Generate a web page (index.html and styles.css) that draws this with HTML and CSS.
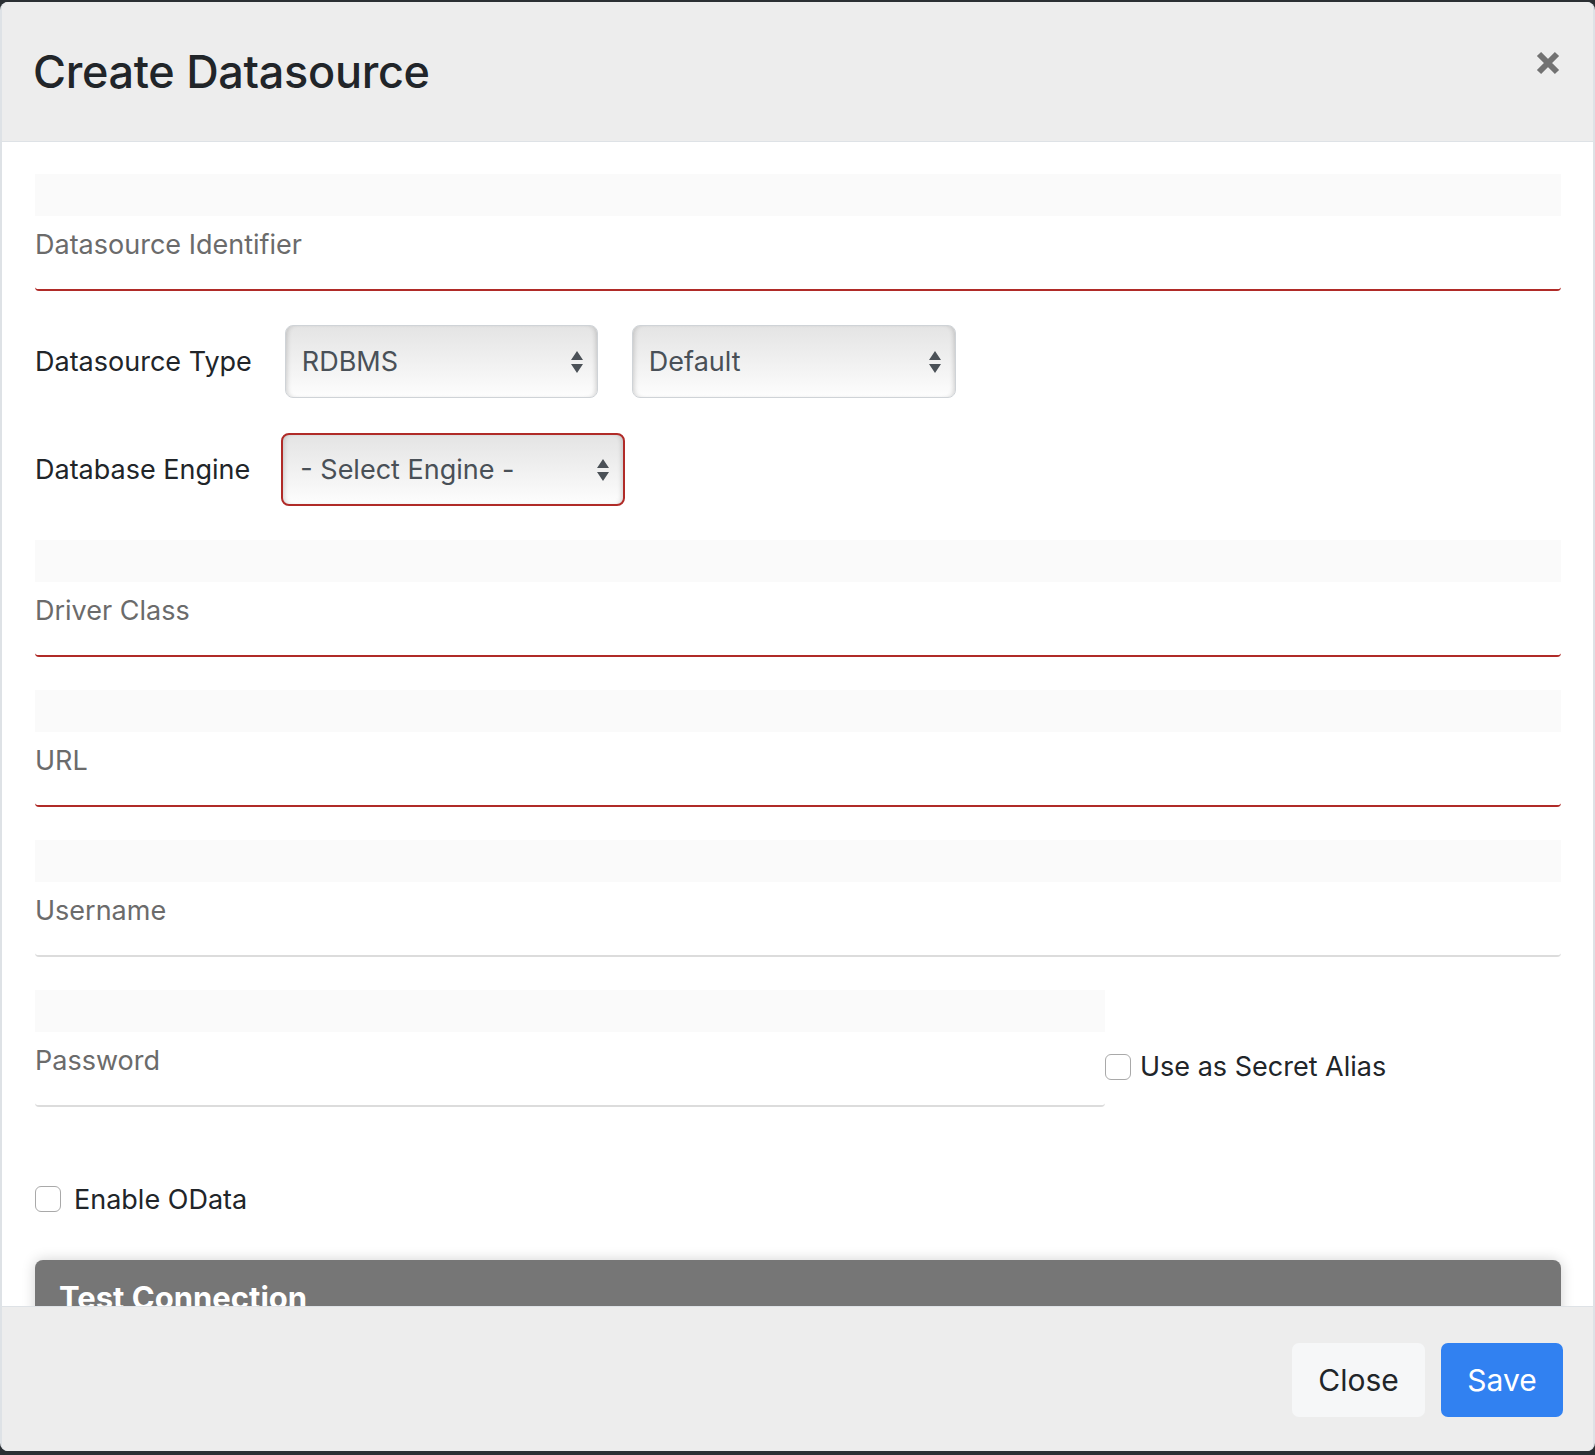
FILE: index.html
```html
<!DOCTYPE html>
<html lang="en">
<head>
<meta charset="utf-8">
<title>Create Datasource</title>
<link rel="stylesheet" href="styles.css">
</head>
<body>
<div class="modal">
  <div class="modal-header">
    <h5 class="modal-title">Create Datasource</h5>
    <button class="close-x" type="button" aria-label="Close">
      <svg width="24" height="24" viewBox="0 0 24 24"><path d="M3 3 L21 21 M21 3 L3 21" stroke="#727272" stroke-width="6" fill="none"/></svg>
    </button>
  </div>
  <div class="modal-body">
    <div class="field field-first">
      <div class="field-top"></div>
      <input class="field-input invalid" type="text" placeholder="Datasource Identifier">
    </div>

    <div class="select-row">
      <label class="row-label">Datasource Type</label>
      <div class="select sel-type"><span>RDBMS</span>
        <svg class="arrows" width="12" height="22" viewBox="0 0 12 22"><path d="M0 9 L6 0 L12 9 Z M0 13 L12 13 L6 22 Z" fill="#4b5157"/></svg>
      </div>
      <div class="select sel-default"><span>Default</span>
        <svg class="arrows" width="12" height="22" viewBox="0 0 12 22"><path d="M0 9 L6 0 L12 9 Z M0 13 L12 13 L6 22 Z" fill="#4b5157"/></svg>
      </div>
    </div>

    <div class="select-row row-engine">
      <label class="row-label">Database Engine</label>
      <div class="select sel-engine invalid-select"><span>- Select Engine -</span>
        <svg class="arrows" width="12" height="22" viewBox="0 0 12 22"><path d="M0 9 L6 0 L12 9 Z M0 13 L12 13 L6 22 Z" fill="#4b5157"/></svg>
      </div>
    </div>

    <div class="field">
      <div class="field-top"></div>
      <input class="field-input invalid" type="text" placeholder="Driver Class">
    </div>

    <div class="field">
      <div class="field-top"></div>
      <input class="field-input invalid" type="text" placeholder="URL">
    </div>

    <div class="field">
      <div class="field-top"></div>
      <input class="field-input" type="text" placeholder="Username">
    </div>

    <div class="password-row">
      <div class="field field-password">
        <div class="field-top"></div>
        <input class="field-input" type="password" placeholder="Password">
      </div>
      <label class="check check-secret"><input type="checkbox"><span>Use as Secret Alias</span></label>
    </div>

    <label class="check check-odata"><input type="checkbox"><span>Enable OData</span></label>

    <div class="test-panel">
      <div class="test-title">Test Connection</div>
    </div>
  </div>
  <div class="modal-footer">
    <button class="btn btn-light" type="button">Close</button>
    <button class="btn btn-primary" type="button">Save</button>
  </div>
</div>
</body>
</html>
```

FILE: styles.css
```css
* { box-sizing: border-box; }

html, body {
  margin: 0;
  padding: 0;
}

body {
  background: #2b2f33;
  padding-top: 2px;
  font-family: Inter, "Noto Sans", "Liberation Sans", sans-serif;
  color: #212529;
  overflow: hidden;
}

.modal {
  width: 1595px;
  height: 1449px;
  background: #fff;
  border-left: 2px solid #dee2e6;
  border-right: 2px solid #dee2e6;
  border-radius: 8px;
  overflow: hidden;
  display: flex;
  flex-direction: column;
}

.modal-header {
  height: 140px;
  flex: none;
  background: #ededed;
  border-bottom: 1px solid #dee2e6;
  display: flex;
  align-items: center;
  justify-content: space-between;
  padding: 0 22px 0 31px;
}

.modal-title {
  margin: 0;
  font-size: 45px;
  font-weight: 500;
  color: #212529;
  letter-spacing: -0.3px;
}

.close-x {
  border: 0;
  background: transparent;
  padding: 0;
  width: 24px;
  height: 24px;
  margin-top: -18px;
  margin-right: 11px;
  display: flex;
}

.modal-body {
  flex: 1;
  min-height: 0;
  overflow: hidden;
  padding: 32px 32px 0 33px;
}

.field {
  margin-bottom: 33px;
}

.field-first {
  margin-bottom: 34px;
}

.field-top {
  height: 42px;
  background: #fafafa;
}

.field-input {
  display: block;
  width: 100%;
  height: 75px;
  border: 0;
  border-bottom: 2px solid #dcdcdc;
  border-radius: 0 0 4px 4px;
  padding: 12px 0 29px 0;
  font-family: inherit;
  font-size: 27px;
  line-height: 32px;
  color: #495057;
  background: #fff;
  outline: none;
}

.field-input::placeholder {
  color: #6b6b6b;
  opacity: 1;
}

.field-input.invalid {
  border-bottom-color: #b02b28;
}

.select-row {
  display: flex;
  align-items: center;
  height: 73px;
  margin-bottom: 35px;
}

.row-engine {
  margin-bottom: 34px;
}

.row-label {
  font-size: 27px;
  color: #212529;
  margin-right: 33px;
  white-space: nowrap;
}

.row-engine .row-label {
  margin-right: 31px;
}

.select {
  position: relative;
  height: 73px;
  border: 1px solid #cfd3d7;
  border-radius: 8px;
  background: linear-gradient(to bottom, #e4e4e4 0%, #efefef 45%, #fdfdfd 100%);
  box-shadow: inset 4px 0 5px -3px rgba(0,0,0,0.18), inset -4px 0 5px -3px rgba(0,0,0,0.18);
  display: flex;
  align-items: center;
  padding-left: 16px;
  font-size: 27px;
  color: #495057;
}

.select .arrows {
  position: absolute;
  right: 14px;
  top: 50%;
  margin-top: -11px;
}

.sel-type { width: 313px; margin-right: 34px; }
.sel-default { width: 324px; }
.sel-engine { width: 344px; padding-left: 17px; }

.invalid-select {
  border: 2px solid #b02b28;
}

.password-row {
  display: flex;
  align-items: center;
}

.field-password {
  width: 1070px;
  flex: none;
  margin-bottom: 0;
}

.check {
  display: flex;
  align-items: center;
  font-size: 27px;
  color: #212529;
}

.check input {
  appearance: none;
  -webkit-appearance: none;
  width: 26px;
  height: 26px;
  margin: 0;
  border: 1.5px solid #a9a9a9;
  border-radius: 6px;
  background: #fff;
}

.check-secret {
  margin-top: 36px;
}

.check-secret input {
  margin-right: 9px;
}

.check-odata {
  margin-top: 72px;
  height: 40px;
}

.check-odata input {
  margin-right: 13px;
}

.test-panel {
  margin-top: 41px;
  height: 200px;
  background: #767676;
  border-radius: 8px 8px 0 0;
  box-shadow: 0 0 14px rgba(0,0,0,0.18);
  padding: 19px 24px;
}

.test-title {
  color: #fff;
  font-size: 31px;
  font-weight: 700;
}

.modal-footer {
  flex: none;
  height: 145px;
  background: #ededed;
  border-top: 1px solid #dee2e6;
  display: flex;
  align-items: center;
  justify-content: flex-end;
  padding: 2px 30px 0 0;
}

.btn {
  height: 74px;
  border: 0;
  border-radius: 7px;
  font-family: inherit;
  font-size: 30px;
  padding: 0;
}

.btn-light {
  width: 133px;
  background: #f6f7f8;
  color: #212529;
  margin-right: 16px;
}

.btn-primary {
  width: 122px;
  background: #3181f1;
  color: #fff;
}
```
